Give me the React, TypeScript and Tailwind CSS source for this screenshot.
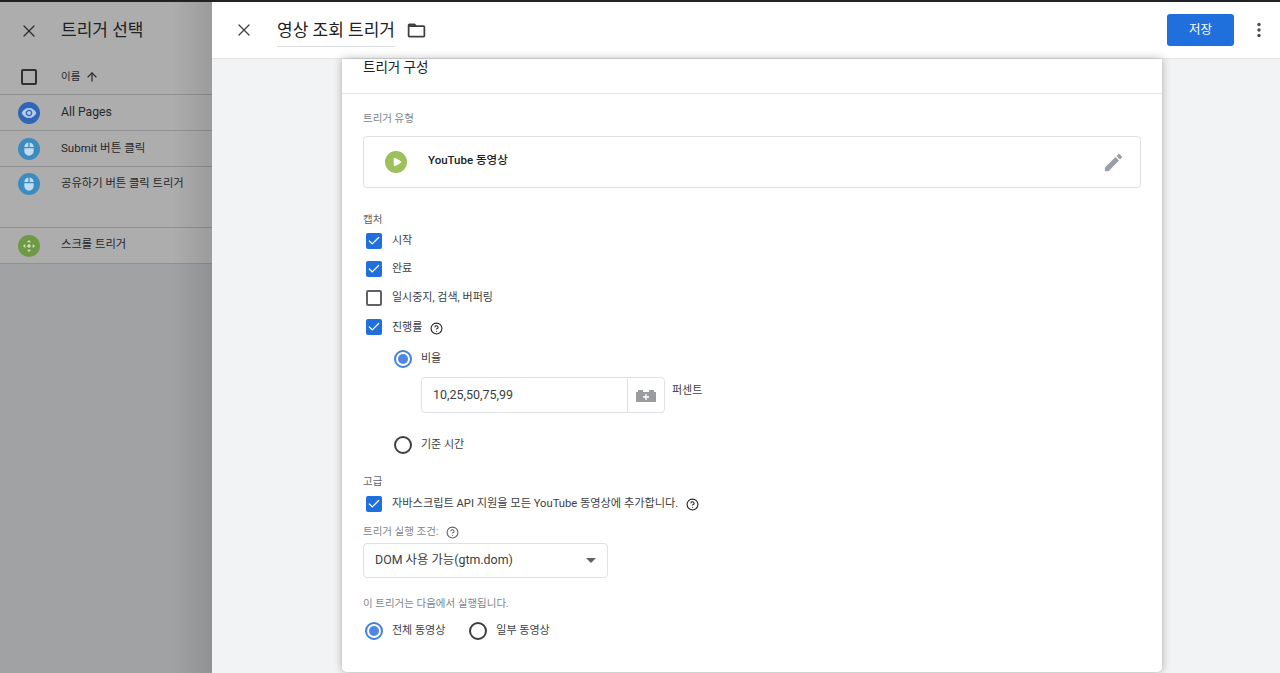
import { HelpCircle, X, ArrowUp, Check, Play } from "lucide-react"
import type { ReactNode } from "react"

const font = { fontFamily: '"Roboto", "Noto Sans CJK KR", sans-serif' }

function CheckBox({ checked }: { checked?: boolean }) {
  if (checked) {
    return (
      <span className="flex h-4 w-4 shrink-0 items-center justify-center rounded-[2px] bg-[#1f6fdc]">
        <Check className="h-3.5 w-3.5 text-white" strokeWidth={2.2} />
      </span>
    )
  }
  return <span className="block h-4 w-4 shrink-0 rounded-[2px] border-2 border-[#5f6368] bg-white" />
}

function Radio({ checked }: { checked?: boolean }) {
  return (
    <span className={`flex h-[18px] w-[18px] shrink-0 items-center justify-center rounded-full border-2 ${checked ? "border-[#3f80e0]" : "border-[#3c4043]"}`}>
      {checked && <span className="block h-2.5 w-2.5 rounded-full bg-[#4f86e5]" />}
    </span>
  )
}

function CheckRow({ checked, className, children }: { checked?: boolean; className: string; children: ReactNode }) {
  return (
    <div className={`flex items-center gap-2.5 pl-[3px] text-[11px] text-[#3c4043] ${className}`}>
      <CheckBox checked={checked} />
      {children}
    </div>
  )
}

function EyeIcon() {
  return (
    <svg viewBox="0 0 24 24" className="h-4 w-4 fill-[#b4cbec]">
      <path d="M12 4.5C7 4.5 2.73 7.61 1 12c1.73 4.39 6 7.5 11 7.5s9.27-3.11 11-7.5c-1.73-4.39-6-7.5-11-7.5zM12 17c-2.76 0-5-2.24-5-5s2.24-5 5-5 5 2.24 5 5-2.24 5-5 5zm0-8c-1.66 0-3 1.34-3 3s1.34 3 3 3 3-1.34 3-3-1.34-3-3-3z" />
    </svg>
  )
}

function MouseIcon() {
  return (
    <svg viewBox="0 0 24 24" className="h-4 w-4 fill-[#c0dcee]">
      <path d="M11 2.1C7.6 2.6 5 5.5 5 9h6V2.1zM13 2.1V9h6c0-3.5-2.6-6.4-6-6.9zM5 11v4c0 3.9 3.1 7 7 7s7-3.1 7-7v-4H5z" />
    </svg>
  )
}

function ScrollIcon() {
  return (
    <svg viewBox="0 0 24 24" className="h-4 w-4 fill-[#d3e2c2]">
      <path d="M12 3l3 3.5H9zM12 21l-3-3.5h6zM3 12l3.5-3v6zM21 12l-3.5 3V9z" />
      <circle cx="12" cy="12" r="2.6" />
    </svg>
  )
}

function BrickIcon() {
  return (
    <svg viewBox="0 0 20 13" className="h-[13px] w-5">
      <path className="fill-[#9a9c9f]" d="M0 13V3h2V1h5v2h6V1h5v2h2v10z" />
      <path className="fill-white" d="M9.3 5h1.400v2.300H13v1.400h-2.300V11H9.300V8.700H7V7.300h2.300z" />
    </svg>
  )
}

function TriggerRow({ color, icon, label, labelClass = "text-[11.5px]", className = "h-9 items-center" }: { color: string; icon: ReactNode; label: string; labelClass?: string; className?: string }) {
  return (
    <div className={`flex border-b border-[#909192] bg-[#adadad] pl-[18px] ${className}`}>
      <span className={`flex h-[22px] w-[22px] shrink-0 items-center justify-center rounded-full ${color}`}>{icon}</span>
      <span className={`ml-[21px] flex h-[22px] items-center text-[#27282a] ${labelClass}`}>{label}</span>
    </div>
  )
}

export default function App() {
  return (
    <div className="flex h-[673px] w-[1280px] flex-col overflow-hidden bg-[#a0a2a4]" style={font}>
      <div className="h-0.5 shrink-0 bg-[#202124]" />
      <div className="flex min-h-0 flex-1">
        {/* trigger picker behind the sheet */}
        <aside className="relative w-[212px] shrink-0">
          <div className="flex h-[56px] items-center bg-[#adadad] pl-[19px] pt-[1px]">
            <X className="h-5 w-5 text-[#2b2c2e]" strokeWidth={1.5} />
            <span className="ml-[22px] text-[17px] text-[#202124]">트리거 선택</span>
          </div>
          <div className="flex h-[37px] items-center border-b border-[#909192] bg-[#adadad] pl-[21px] pt-[1px]">
            <span className="block h-4 w-4 rounded-[2px] border-2 border-[#2f3033]" />
            <span className="ml-[24px] text-[10.5px] text-[#27282a]">이름</span>
            <ArrowUp className="ml-[5px] h-3.5 w-3.5 text-[#27282a]" />
          </div>
          <TriggerRow color="bg-[#2f66b8]" icon={<EyeIcon />} label="All Pages" labelClass="text-[12.2px]" />
          <TriggerRow color="bg-[#3d8cc0]" icon={<MouseIcon />} label="Submit 버튼 클릭" />
          <TriggerRow color="bg-[#3d8cc0]" className="h-[61px] items-start pt-[6px]" icon={<MouseIcon />} label="공유하기 버튼 클릭 트리거" labelClass="text-[11.3px]" />
          <TriggerRow color="bg-[#6f9a45]" icon={<ScrollIcon />} label="스크롤 트리거" labelClass="text-[11.3px]" />
          <div className="absolute inset-y-0 right-0 w-10 bg-gradient-to-r from-transparent to-[rgba(0,0,0,0.1)]" />
        </aside>

        <main className="flex min-w-0 flex-1 flex-col bg-[#f1f3f4]">
          <header className="flex h-[57px] shrink-0 items-center border-b border-[#e3e4e6] bg-white pl-[22px] pr-[12px]">
            <X className="h-5 w-5 text-[#3c4043]" strokeWidth={1.5} />
            <div className="ml-[23px] border-b border-[#dadce0] pb-[5px] pt-[6px] text-[17px] leading-[21px] text-[#202124]">영상 조회 트리거</div>
            <svg viewBox="0 0 24 24" className="ml-[11px] h-[21px] w-[21px] fill-[#3c4043]">
              <path d="M20 6h-8l-2-2H4c-1.100 0-1.990.9-1.990 2L2 18c0 1.100.9 2 2 2h16c1.100 0 2-.9 2-2V8c0-1.100-.9-2-2-2zm0 12H4V8h16v10z" />
            </svg>
            <button className="ml-auto flex h-8 w-[67px] items-center justify-center rounded-[3px] bg-[#1f6fdc] text-[12.5px] text-white">저장</button>
            <svg viewBox="0 0 18 18" className="ml-4 h-[18px] w-[18px] fill-[#4a4d51]">
              <circle cx="9" cy="3.500" r="1.700" />
              <circle cx="9" cy="9" r="1.700" />
              <circle cx="9" cy="14.500" r="1.700" />
            </svg>
          </header>

          <div className="min-h-0 flex-1 px-[130px]">
            <section className="h-[613px] w-[820px] rounded-b-[5px] bg-white shadow-[0_0_8px_rgba(0,0,0,0.3)]">
              <div className="flex h-[35px] items-start border-b border-[#e6e7e8] pl-[21px] pt-[1px] text-[13.5px] leading-[15px] text-[#202124]">트리거 구성</div>
              <div className="px-[21px]">
                <div className="pt-[18px] text-[10.5px] leading-[14px] text-[#80868b]">트리거 유형</div>
                <div className="mt-[10px] flex h-[52px] items-center rounded-[4px] border border-[#dfe1e5] pl-[21px] pr-[15px]">
                  <span className="flex h-[22px] w-[22px] items-center justify-center rounded-full bg-[#9cc05c]">
                    <Play className="ml-px h-2.5 w-2.5 fill-white text-white" />
                  </span>
                  <span className="ml-[21px] -mt-[2px] text-[11.5px] font-medium text-[#202124]">YouTube 동영상</span>
                  <svg viewBox="0 0 24 24" className="ml-auto h-[23px] w-[23px] fill-[#9aa0a6]">
                    <path d="M3 17.250V21h3.750L17.810 9.940l-3.750-3.750L3 17.250zM20.710 7.040c.39-.39.39-1.020 0-1.410l-2.340-2.340c-.39-.39-1.020-.39-1.410 0l-1.830 1.830 3.750 3.750 1.830-1.830z" />
                  </svg>
                </div>

                <div className="mt-[25px] text-[10.5px] leading-[14px] text-[#5f6368]">캡처</div>
                <CheckRow checked className="mt-[6px] h-4">시작</CheckRow>
                <CheckRow checked className="mt-[12px] h-4">완료</CheckRow>
                <CheckRow className="mt-[13px] h-4">일시중지, 검색, 버퍼링</CheckRow>
                <CheckRow checked className="mt-[13px] h-4">
                  <span className="mt-[2px]">진행률</span>
                  <HelpCircle className="-ml-0.5 mt-[2px] h-[13px] w-[13px] text-[#202124]" />
                </CheckRow>

                <div className="mt-[15px] flex h-[18px] items-center pl-[31px] text-[11px] text-[#3c4043]">
                  <Radio checked />
                  <span className="ml-[9px]">비율</span>
                </div>
                <div className="mt-[9px] flex items-start pl-[58px]">
                  <div className="flex h-9 w-[244px] items-center rounded-[4px] border border-[#dfe1e5]">
                    <span className="flex-1 pl-[11px] text-[12.5px] text-[#3c4043]">10,25,50,75,99</span>
                    <span className="flex h-full w-[37px] items-center justify-center border-l border-[#dfe1e5]">
                      <BrickIcon />
                    </span>
                  </div>
                  <span className="ml-[7px] mt-[6px] text-[11px] text-[#3c4043]">퍼센트</span>
                </div>
                <div className="mt-[23px] flex h-[18px] items-center pl-[31px] text-[11px] text-[#3c4043]">
                  <Radio />
                  <span className="ml-[9px]">기준 시간</span>
                </div>

                <div className="mt-[21px] text-[10.5px] leading-[14px] text-[#5f6368]">고급</div>
                <CheckRow checked className="mt-[7px] h-4">
                  <span className="mt-[1px] text-[11.2px]">자바스크립트 API 지원을 모든 YouTube 동영상에 추가합니다.</span>
                  <HelpCircle className="-ml-0.5 mt-[1px] h-[13px] w-[13px] text-[#202124]" />
                </CheckRow>
                <div className="mt-[13px] flex h-[14px] items-center gap-2 text-[10.5px] text-[#80868b]">
                  트리거 실행 조건:
                  <HelpCircle className="h-[13px] w-[13px] text-[#5f6368]" />
                </div>
                <div className="mt-[4px] flex h-[35px] w-[245px] items-center justify-between rounded-[4px] border border-[#dfe1e5] pl-[11px] pr-[11px] text-[12.4px] text-[#3c4043]">
                  DOM 사용 가능(gtm.dom)
                  <span className="h-0 w-0 border-x-[5px] border-t-[5px] border-x-transparent border-t-[#5f6368]" />
                </div>
                <div className="mt-[19px] text-[10.5px] leading-[14px] text-[#80868b]">이 트리거는 다음에서 실행됩니다.</div>
                <div className="mt-[11px] flex h-[18px] items-center pl-[2px] text-[11px] text-[#3c4043]">
                  <Radio checked />
                  <span className="ml-[9px]">전체 동영상</span>
                  <span className="ml-[24px]"><Radio /></span>
                  <span className="ml-[9px]">일부 동영상</span>
                </div>
              </div>
            </section>
          </div>
        </main>
      </div>
    </div>
  )
}
